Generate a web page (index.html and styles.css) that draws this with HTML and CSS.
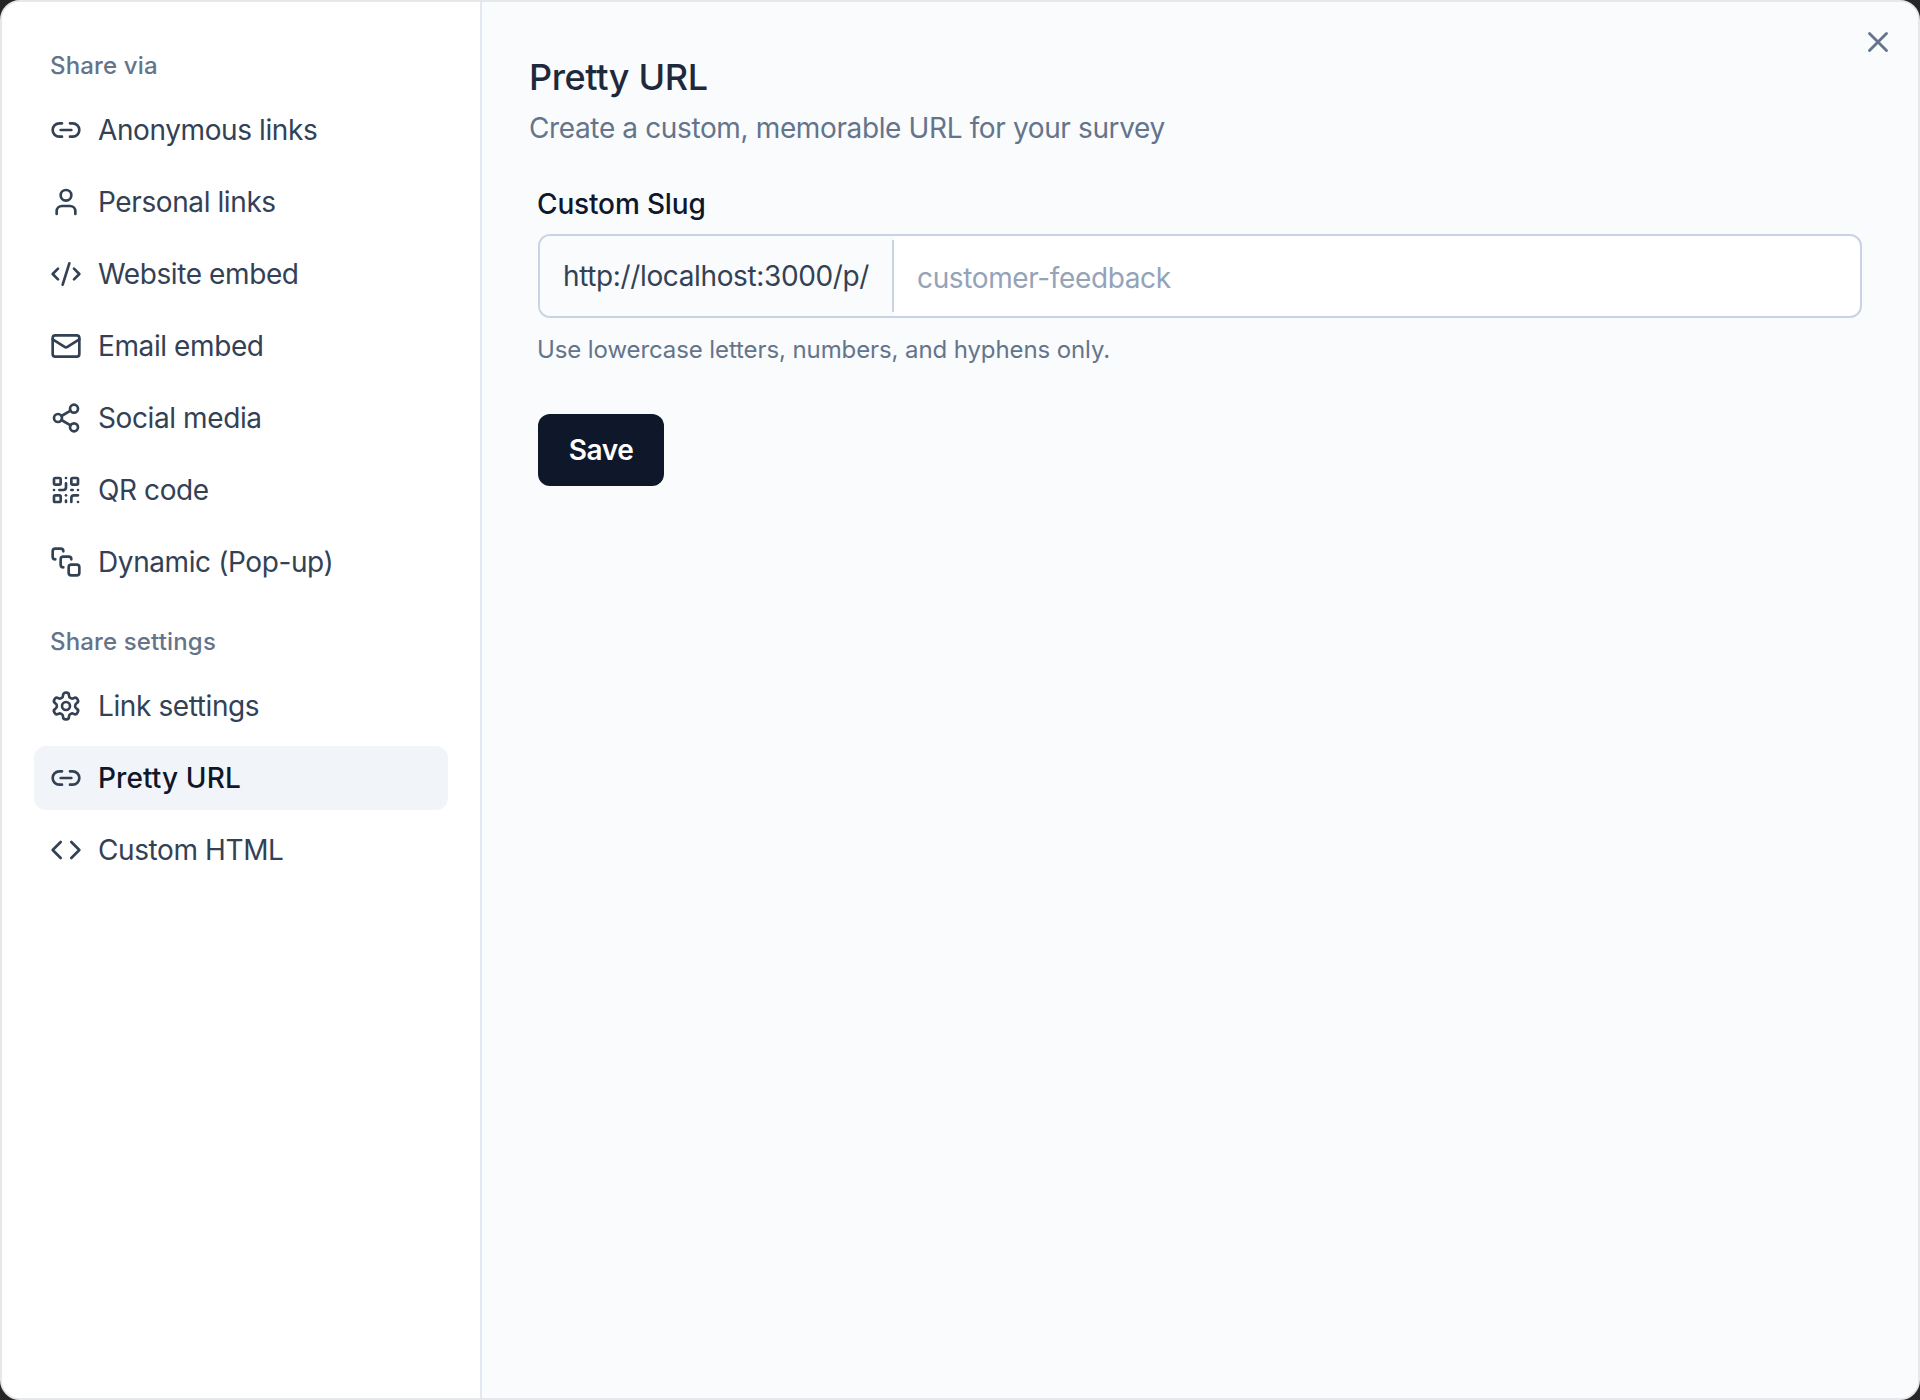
FILE: index.html
```html
<!DOCTYPE html>
<html lang="en">
<head>
<meta charset="utf-8">
<title>Share survey</title>
<link rel="stylesheet" href="styles.css">
</head>
<body>
<div class="modal">
  <aside class="sidebar">
    <h3 class="nav-label">Share via</h3>
    <nav class="nav">
      <a class="nav-item"><svg class="icon" viewBox="0 0 24 24"><path d="M9 17H7A5 5 0 0 1 7 7h2"/><path d="M15 7h2a5 5 0 1 1 0 10h-2"/><line x1="8" x2="16" y1="12" y2="12"/></svg><span>Anonymous links</span></a>
      <a class="nav-item"><svg class="icon" viewBox="0 0 24 24"><path d="M19 21v-2a4 4 0 0 0-4-4H9a4 4 0 0 0-4 4v2"/><circle cx="12" cy="7" r="4"/></svg><span>Personal links</span></a>
      <a class="nav-item"><svg class="icon" viewBox="0 0 24 24"><path d="m18 16 4-4-4-4"/><path d="m6 8-4 4 4 4"/><path d="m14.5 4-5 16"/></svg><span>Website embed</span></a>
      <a class="nav-item"><svg class="icon" viewBox="0 0 24 24"><rect width="20" height="16" x="2" y="4" rx="2"/><path d="m22 7-8.97 5.7a1.94 1.94 0 0 1-2.06 0L2 7"/></svg><span>Email embed</span></a>
      <a class="nav-item"><svg class="icon" viewBox="0 0 24 24"><circle cx="18" cy="5" r="3"/><circle cx="6" cy="12" r="3"/><circle cx="18" cy="19" r="3"/><line x1="8.59" x2="15.42" y1="13.51" y2="17.49"/><line x1="15.41" x2="8.59" y1="6.51" y2="10.49"/></svg><span>Social media</span></a>
      <a class="nav-item"><svg class="icon" viewBox="0 0 24 24"><rect width="5" height="5" x="3" y="3" rx="1"/><rect width="5" height="5" x="16" y="3" rx="1"/><rect width="5" height="5" x="3" y="16" rx="1"/><path d="M21 16h-3a2 2 0 0 0-2 2v3"/><path d="M21 21v.01"/><path d="M12 7v3a2 2 0 0 1-2 2H7"/><path d="M3 12h.01"/><path d="M12 3h.01"/><path d="M12 16v.01"/><path d="M16 12h1"/><path d="M21 12v.01"/><path d="M12 21v-1"/></svg><span>QR code</span></a>
      <a class="nav-item"><svg class="icon" viewBox="0 0 24 24"><path d="M4 10c-1.1 0-2-.9-2-2V4c0-1.1.9-2 2-2h4c1.1 0 2 .9 2 2"/><path d="M10 16c-1.1 0-2-.9-2-2v-4c0-1.1.9-2 2-2h4c1.1 0 2 .9 2 2"/><rect width="8" height="8" x="14" y="14" rx="2"/></svg><span>Dynamic (Pop-up)</span></a>
    </nav>
    <h3 class="nav-label nav-label-second">Share settings</h3>
    <nav class="nav">
      <a class="nav-item"><svg class="icon" viewBox="0 0 24 24"><path d="M12.22 2h-.44a2 2 0 0 0-2 2v.18a2 2 0 0 1-1 1.73l-.43.25a2 2 0 0 1-2 0l-.15-.08a2 2 0 0 0-2.73.73l-.22.38a2 2 0 0 0 .73 2.73l.15.1a2 2 0 0 1 1 1.72v.51a2 2 0 0 1-1 1.74l-.15.09a2 2 0 0 0-.73 2.73l.22.38a2 2 0 0 0 2.73.73l.15-.08a2 2 0 0 1 2 0l.43.25a2 2 0 0 1 1 1.73V20a2 2 0 0 0 2 2h.44a2 2 0 0 0 2-2v-.18a2 2 0 0 1 1-1.73l.43-.25a2 2 0 0 1 2 0l.15.08a2 2 0 0 0 2.73-.73l.22-.39a2 2 0 0 0-.73-2.73l-.15-.08a2 2 0 0 1-1-1.74v-.5a2 2 0 0 1 1-1.74l.15-.09a2 2 0 0 0 .73-2.73l-.22-.38a2 2 0 0 0-2.73-.73l-.15.08a2 2 0 0 1-2 0l-.43-.25a2 2 0 0 1-1-1.73V4a2 2 0 0 0-2-2z"/><circle cx="12" cy="12" r="3"/></svg><span>Link settings</span></a>
      <a class="nav-item nav-item-active"><svg class="icon" viewBox="0 0 24 24"><path d="M9 17H7A5 5 0 0 1 7 7h2"/><path d="M15 7h2a5 5 0 1 1 0 10h-2"/><line x1="8" x2="16" y1="12" y2="12"/></svg><span>Pretty URL</span></a>
      <a class="nav-item"><svg class="icon" viewBox="0 0 24 24"><path d="m16 18 6-6-6-6"/><path d="m8 6-6 6 6 6"/></svg><span>Custom HTML</span></a>
    </nav>
  </aside>
  <main class="main">
    <button class="close" aria-label="Close"><svg class="close-icon" viewBox="0 0 24 24"><path d="M18 6 6 18"/><path d="m6 6 12 12"/></svg></button>
    <h2 class="title">Pretty URL</h2>
    <p class="subtitle">Create a custom, memorable URL for your survey</p>
    <form class="form">
      <label class="field-label" for="slug">Custom Slug</label>
      <div class="input-group">
        <span class="prefix">http://localhost:3000/p/</span>
        <input class="slug-input" id="slug" type="text" placeholder="customer-feedback">
      </div>
      <p class="hint">Use lowercase letters, numbers, and hyphens only.</p>
      <button class="save" type="button">Save</button>
    </form>
  </main>
</div>
</body>
</html>
```
FILE: styles.css
```css
* { box-sizing: border-box; }
html, body { margin: 0; height: 100%; }
body {
  background: #262626;
  font-family: Inter, "Liberation Sans", sans-serif;
  overflow: hidden;
}
.modal {
  display: flex;
  width: 1920px;
  height: 1400px;
  border: 2px solid #e5e7eb;
  border-radius: 20px;
  overflow: hidden;
  background: #fff;
}
.sidebar {
  width: 480px;
  flex: none;
  padding: 48px 32px 0;
  border-right: 2px solid #e2e8f0;
  background: #fff;
}
.nav-label {
  margin: 0 0 16px 16px;
  font-size: 24px;
  line-height: 32px;
  font-weight: 500;
  letter-spacing: 0.15px;
  color: #64748b;
}
.nav-label-second { margin-top: 32px; }
.nav { display: flex; flex-direction: column; gap: 8px; }
.nav-item {
  display: flex;
  align-items: center;
  gap: 16px;
  height: 64px;
  padding: 0 16px;
  border-radius: 12px;
  font-size: 28px;
  letter-spacing: -0.4px;
  color: #334155;
}
.nav-item-active {
  background: #f1f5f9;
  color: #0f172a;
  font-weight: 500;
  letter-spacing: 0.1px;
}
.icon {
  width: 32px;
  height: 32px;
  flex: none;
  fill: none;
  stroke: #334155;
  stroke-width: 2;
  stroke-linecap: round;
  stroke-linejoin: round;
}
.main {
  position: relative;
  flex: 1;
  padding: 48px 56px 0 47px;
  background: #f9fbfd;
}
.close {
  position: absolute;
  top: 23px;
  right: 23px;
  width: 34px;
  height: 34px;
  padding: 0;
  border: 0;
  background: none;
}
.close-icon {
  display: block;
  width: 34px;
  height: 34px;
  fill: none;
  stroke: #64748b;
  stroke-width: 2;
  stroke-linecap: round;
  stroke-linejoin: round;
}
.title {
  margin: 0;
  font-size: 36px;
  line-height: 54px;
  font-weight: 500;
  letter-spacing: -0.37px;
  color: #1e293b;
}
.subtitle {
  margin: 4px 0 0;
  font-size: 28px;
  line-height: 40px;
  letter-spacing: -0.37px;
  color: #64748b;
}
.form { padding: 36px 0 0 9px; }
.field-label {
  display: block;
  margin: 0 0 10px -1px;
  font-size: 28px;
  line-height: 40px;
  font-weight: 500;
  letter-spacing: -0.15px;
  color: #0f172a;
}
.input-group {
  display: flex;
  align-items: stretch;
  height: 84px;
  border: 2px solid #c8d4e3;
  border-radius: 12px;
  background: #fff;
  overflow: hidden;
}
.prefix {
  display: flex;
  align-items: center;
  padding: 0 25px 0 23px;
  position: relative;
  font-size: 28px;
  letter-spacing: -0.37px;
  color: #334155;
  background: #f9fbfd;
  white-space: nowrap;
}
.prefix::after {
  content: "";
  position: absolute;
  right: 0;
  top: 4px;
  bottom: 4px;
  width: 2px;
  background: #c8d4e3;
}
.slug-input {
  flex: 1;
  min-width: 0;
  padding: 4px 24px 0 23px;
  border: 0;
  outline: 0;
  background: transparent;
  font: inherit;
  font-size: 28px;
  letter-spacing: -0.37px;
  color: #0f172a;
}
.slug-input::placeholder { color: #94a3b8; opacity: 1; }
.hint {
  margin: 14px 0 0 -1px;
  font-size: 24px;
  line-height: 36px;
  letter-spacing: -0.1px;
  color: #64748b;
}
.save {
  display: block;
  margin-top: 46px;
  width: 126px;
  height: 72px;
  padding: 0;
  border: 0;
  border-radius: 12px;
  background: #0f172a;
  color: #fff;
  font: inherit;
  font-size: 28px;
  font-weight: 600;
  letter-spacing: -0.4px;
}
```
